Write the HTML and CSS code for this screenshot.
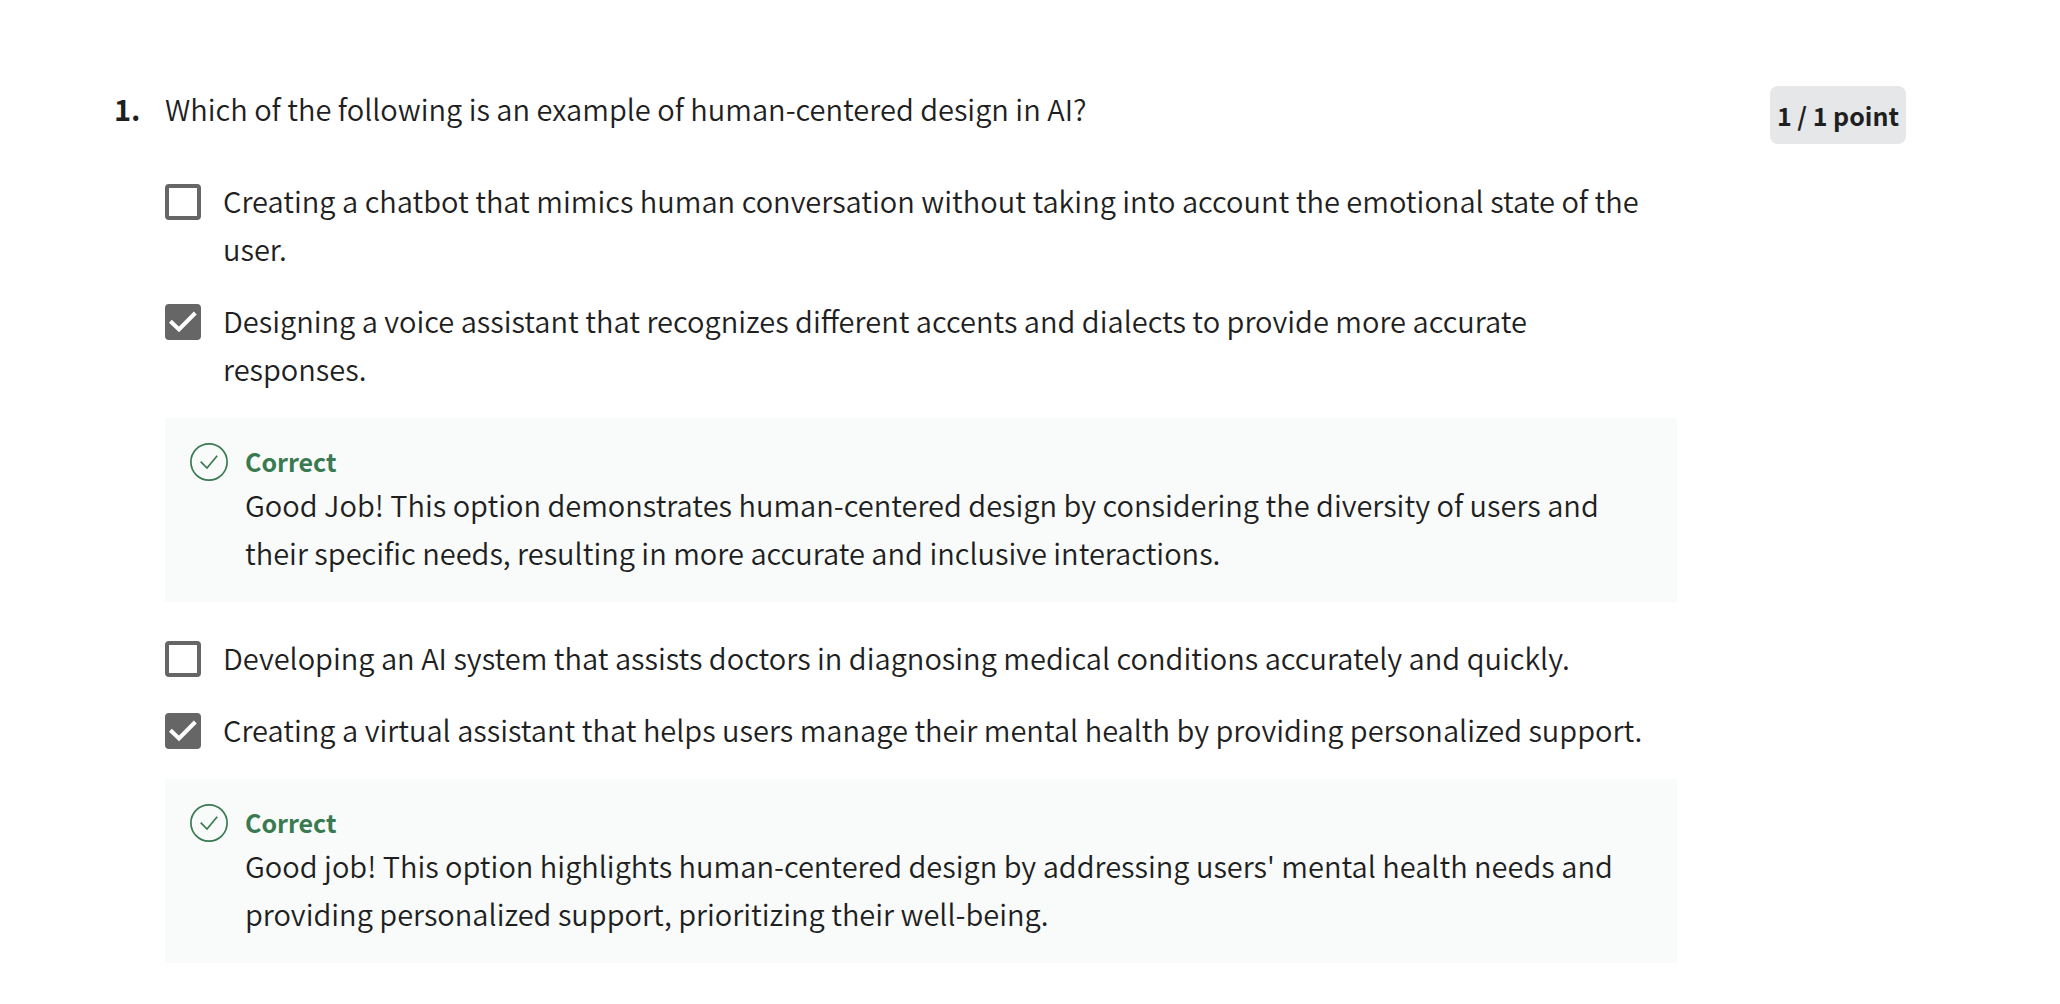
FILE: index.html
```html
<!DOCTYPE html>
<html lang="en">
<head>
<meta charset="utf-8">
<title>Quiz feedback</title>
<meta name="viewport" content="width=device-width, initial-scale=1">
<link rel="stylesheet" href="styles.css">
</head>
<body>
<main class="question">
  <div class="number">1.</div>
  <fieldset class="body" aria-labelledby="prompt">
    <p class="prompt" id="prompt">Which of the following is an example of human-centered design in AI?</p>
    <div class="option">
      <input class="box" type="checkbox" id="a">
      <label class="text" for="a">Creating a chatbot that mimics human conversation without taking into account the emotional state of the user.</label>
    </div>
    <div class="option">
      <input class="box" type="checkbox" id="b" checked>
      <label class="text" for="b">Designing a voice assistant that recognizes different accents and dialects to provide more accurate responses.</label>
    </div>
    <div class="feedback">
      <svg class="icon" viewBox="0 0 40 40" aria-hidden="true"><circle cx="20" cy="20" r="18.1"/><path d="M11.7 19.6l6.3 6.4 10.2-12.2"/></svg>
      <div>
        <h2 class="verdict">Correct</h2>
        <p class="text">Good Job! This option demonstrates human-centered design by considering the diversity of users and their specific needs, resulting in more accurate and inclusive interactions.</p>
      </div>
    </div>
    <div class="option">
      <input class="box" type="checkbox" id="c">
      <label class="text" for="c">Developing an AI system that assists doctors in diagnosing medical conditions accurately and quickly.</label>
    </div>
    <div class="option">
      <input class="box" type="checkbox" id="d" checked>
      <label class="text" for="d">Creating a virtual assistant that helps users manage their mental health by providing personalized support.</label>
    </div>
    <div class="feedback">
      <svg class="icon" viewBox="0 0 40 40" aria-hidden="true"><circle cx="20" cy="20" r="18.1"/><path d="M11.7 19.6l6.3 6.4 10.2-12.2"/></svg>
      <div>
        <h2 class="verdict">Correct</h2>
        <p class="text">Good job! This option highlights human-centered design by addressing users' mental health needs and providing personalized support, prioritizing their well-being.</p>
      </div>
    </div>
  </fieldset>
  <div class="points">1 / 1 point</div>
</main>
</body>
</html>
```

FILE: styles.css
```css
* { box-sizing: border-box; }
body { margin: 0; background: #fff; color: #1f1f1f; font: 350 29px/48px "Noto Sans CJK SC", sans-serif; }
p, h2 { margin: 0; }
.question { display: flex; align-items: flex-start; padding: 84px 154px 40px 114px; }
.number { flex: none; width: 51px; font-weight: 700; }
.body { flex: 1; min-width: 0; margin: 0; padding: 0; border: 0; }
.prompt { margin-bottom: 44px; }
.option { display: flex; align-items: flex-start; gap: 22px; margin-bottom: 24px; padding-right: 24px; }
.box { appearance: none; flex: none; width: 36px; height: 36px; margin: 8px 0 0; border: 4px solid #666; border-radius: 4px; background: #fff; }
.box:checked { background: #666 url("data:image/svg+xml,%3Csvg xmlns='http://www.w3.org/2000/svg' viewBox='0 0 36 36'%3E%3Cpath d='M5.4 17.3l8.6 8.2L30.3 9' fill='none' stroke='white' stroke-width='4'/%3E%3C/svg%3E") border-box; }
.feedback { display: flex; align-items: flex-start; gap: 16px; padding: 24px 24px 26px; margin: 26px 0 31px; background: #f8fbfa; }
.option:has(+ .feedback) { margin-bottom: 0; }
.feedback:last-child { margin-bottom: 0; }
.icon { flex: none; width: 40px; height: 40px; fill: none; stroke: #397a50; stroke-width: 1.7; }
.verdict { color: #397a50; font-size: 25px; line-height: 38px; }
.points { flex: none; margin: 2px 0 0 93px; padding: 8px 7px; border-radius: 8px; background: #e5e7e8; font-size: 25px; line-height: 42px; font-weight: 700; }
```
